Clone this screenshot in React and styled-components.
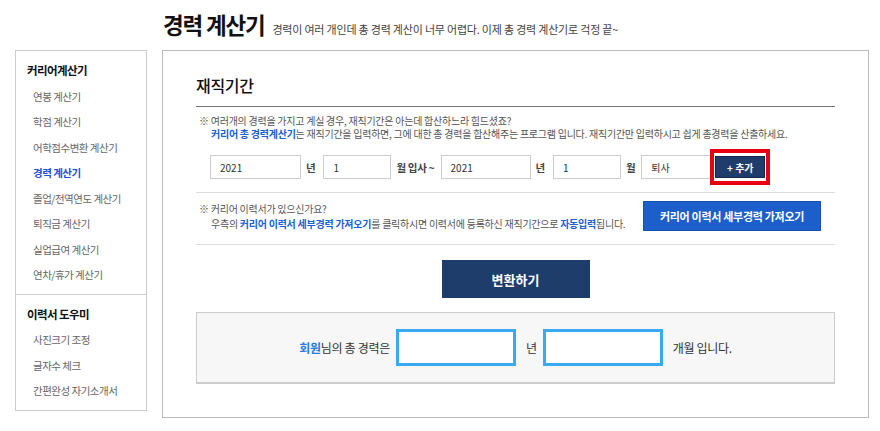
import React from 'react'
import styled, { createGlobalStyle } from 'styled-components'

const GlobalStyle = createGlobalStyle`
  body {
    margin: 0;
    background: #fff;
    font-family: "Noto Sans CJK KR", "Noto Sans", sans-serif;
    color: #333;
  }
  * { box-sizing: border-box; }
`

const Page = styled.div`
  width: 880px;
  padding: 0 0 0 15px;
`

const Header = styled.header`
  height: 50px;
  padding: 11px 0 0 148px;
  display: flex;
  align-items: baseline;
`

const Title = styled.h1`
  margin: 0;
  font-size: 22.5px;
  line-height: 26px;
  font-weight: 700;
  letter-spacing: -1.2px;
  color: #111;
`

const SubTitle = styled.span`
  margin-left: 8px;
  font-size: 11px;
  letter-spacing: -0.2px;
  color: #444;
`

const Body = styled.div`
  display: grid;
  grid-template-columns: 132px 707px;
  column-gap: 15px;
  align-items: start;
`

const Sidebar = styled.aside`
  border: 1px solid #ccc;
`

const SideSection = styled.div`
  padding: 7px 0 6px;
  & + & {
    border-top: 1px solid #ccc;
  }
`

const SideTitle = styled.div`
  padding-left: 11px;
  height: 25.5px;
  line-height: 25.5px;
  font-size: 11.5px;
  font-weight: 700;
  letter-spacing: -0.6px;
  color: #111;
`

const SideItem = styled.a`
  display: block;
  padding-left: 17px;
  height: 25.5px;
  line-height: 25.5px;
  font-size: 10.5px;
  letter-spacing: -0.5px;
  text-decoration: none;
  color: ${(p) => (p.$active ? '#1f4fd6' : '#666')};
  font-weight: ${(p) => (p.$active ? 700 : 400)};
`

const Main = styled.main`
  border: 1px solid #bbb;
  padding: 22px 33px 33px 33px;
`

const Heading = styled.h2`
  margin: 0;
  padding-bottom: 9px;
  border-bottom: 1px solid #777;
  font-size: 16px;
  line-height: 24px;
  font-weight: 500;
  letter-spacing: -0.3px;
  color: #111;
`

const Section = styled.div`
  border-bottom: 1px solid #ddd;
  padding: ${(p) => p.$pad || '7px 0 13px'};
`

const Note = styled.p`
  margin: 0;
  padding-left: 3px;
  font-size: 10px;
  line-height: ${(p) => p.$lh || '13px'};
  letter-spacing: -0.25px;
  color: #555;
`

const NoteLine = styled.span`
  display: block;
  padding-left: 12px;
`

const Em = styled.b`
  color: #1a5fd6;
  font-weight: 700;
`

const InputRow = styled.div`
  display: flex;
  align-items: center;
  margin-top: 15px;
  padding-left: 14px;
`

const Field = styled.input`
  width: ${(p) => p.$w}px;
  height: 24px;
  border: 1px solid #ccc;
  padding: 0 0 0 9px;
  font-family: inherit;
  font-size: 10px;
  color: #333;
  background: #fff;
  outline: none;
`

const Unit = styled.span`
  margin: 0 ${(p) => p.$after || 8}px 0 5px;
  font-size: 10.5px;
  font-weight: 700;
  letter-spacing: -0.3px;
  color: #444;
  white-space: nowrap;
`

const AddWrap = styled.span`
  position: relative;
  margin-left: 4px;
  display: inline-flex;
  &::after {
    content: '';
    position: absolute;
    inset: -7px -5px -7px -5px;
    border: 4px solid #e60012;
  }
`

const AddButton = styled.button`
  width: 50px;
  height: 22px;
  border: 1px solid #14294a;
  background: #1f3c6b;
  color: #fff;
  font-family: inherit;
  font-size: 10px;
  font-weight: 700;
  padding: 0;
`

const ImportRow = styled.div`
  display: flex;
  align-items: center;
  justify-content: space-between;
  padding-right: 14px;
`

const ImportButton = styled.button`
  width: 178px;
  height: 30px;
  border: 1px solid #1650b0;
  background: #1c5fca;
  color: #fff;
  font-family: inherit;
  font-size: 11px;
  font-weight: 700;
  letter-spacing: -0.3px;
`

const ConvertButton = styled.button`
  display: block;
  margin: 15px auto 14px;
  width: 148px;
  height: 38px;
  border: none;
  background: #1f3d6b;
  color: #fff;
  font-family: inherit;
  font-size: 13px;
  font-weight: 700;
`

const ResultBox = styled.div`
  height: 72px;
  background: #f7f7f7;
  border: 1px solid #ccc;
  border-bottom: 2px solid #ccc;
  display: flex;
  align-items: center;
  justify-content: center;
  font-size: 12px;
  letter-spacing: -0.3px;
  color: #333;
`

const Highlight = styled.span`
  color: #2a7be0;
  font-weight: 700;
`

const ResultField = styled.input`
  width: 120px;
  height: 37px;
  margin: 0 10px 0 6px;
  border: 3px solid #38a9f2;
  background: #fff;
  outline: none;
`

const menu1 = [
  '연봉 계산기',
  '학점 계산기',
  '어학점수변환 계산기',
  '경력 계산기',
  '졸업/전역연도 계산기',
  '퇴직금 계산기',
  '실업급여 계산기',
  '연차/휴가 계산기',
]

const menu2 = ['사진크기 조정', '글자수 체크', '간편완성 자기소개서']

export default function App() {
  return (
    <Page>
      <GlobalStyle />
      <Header>
        <Title>경력 계산기</Title>
        <SubTitle>경력이 여러 개인데 총 경력 계산이 너무 어렵다. 이제 총 경력 계산기로 걱정 끝~</SubTitle>
      </Header>
      <Body>
        <Sidebar>
          <SideSection>
            <SideTitle>커리어계산기</SideTitle>
            {menu1.map((m) => (
              <SideItem key={m} href="#" $active={m === '경력 계산기'}>
                {m}
              </SideItem>
            ))}
          </SideSection>
          <SideSection>
            <SideTitle>이력서 도우미</SideTitle>
            {menu2.map((m) => (
              <SideItem key={m} href="#">
                {m}
              </SideItem>
            ))}
          </SideSection>
        </Sidebar>
        <Main>
          <Heading>재직기간</Heading>
          <Section>
            <Note>
              ※ 여러개의 경력을 가지고 계실 경우, 재직기간은 아는데 합산하느라 힘드셨죠?
              <NoteLine>
                <Em>커리어 총 경력계산기</Em>는 재직기간을 입력하면, 그에 대한 총 경력을 합산해주는 프로그램 입니다. 재직기간만 입력하시고 쉽게 총경력을 산출하세요.
              </NoteLine>
            </Note>
            <InputRow>
              <Field $w={91} defaultValue="2021" />
              <Unit>년</Unit>
              <Field $w={68} defaultValue="1" />
              <Unit $after={6}>월 입사 ~</Unit>
              <Field $w={90} defaultValue="2021" />
              <Unit>년</Unit>
              <Field $w={68} defaultValue="1" />
              <Unit $after={6}>월</Unit>
              <Field $w={70} defaultValue="퇴사" />
              <AddWrap>
                <AddButton>+ 추가</AddButton>
              </AddWrap>
            </InputRow>
          </Section>
          <Section $pad="8px 0 13px">
            <ImportRow>
              <Note $lh="15px">
                ※ 커리어 이력서가 있으신가요?
                <NoteLine>
                  우측의 <Em>커리어 이력서 세부경력 가져오기</Em>를 클릭하시면 이력서에 등록하신 재직기간으로 <Em>자동입력</Em>됩니다.
                </NoteLine>
              </Note>
              <ImportButton>커리어 이력서 세부경력 가져오기</ImportButton>
            </ImportRow>
          </Section>
          <ConvertButton>변환하기</ConvertButton>
          <ResultBox>
            <Highlight>회원</Highlight>님의 총 경력은
            <ResultField />
            년
            <ResultField />
            개월 입니다.
          </ResultBox>
        </Main>
      </Body>
    </Page>
  )
}
